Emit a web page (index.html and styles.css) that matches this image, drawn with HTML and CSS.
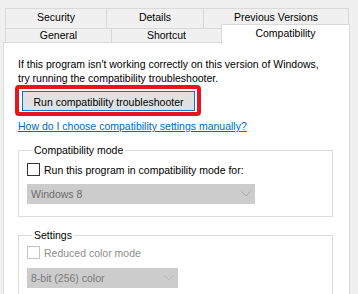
FILE: index.html
```html
<!DOCTYPE html>
<html>
<head>
<meta charset="utf-8">
<link rel="stylesheet" href="styles.css">
</head>
<body>
<div class="window">
  <div class="tabs">
    <div class="tab-row row1">
      <div class="tab t-security">Security</div>
      <div class="tab t-details">Details</div>
      <div class="tab t-prev">Previous Versions</div>
    </div>
    <div class="tab-row row2">
      <div class="tab t-general">General</div>
      <div class="tab t-shortcut">Shortcut</div>
      <div class="tab t-compat selected">Compatibility</div>
    </div>
  </div>
  <div class="panel">
    <p class="intro">If this program isn't working correctly on this version of Windows,<br>try running the compatibility troubleshooter.</p>
    <div class="highlight">
      <button class="btn">Run compatibility troubleshooter</button>
    </div>
    <a class="link" href="#">How do I choose compatibility settings manually?</a>
    <div class="group g-compat">
      <div class="legend">Compatibility mode</div>
      <div class="check c-compat"><span class="box"></span><span>Run this program in compatibility mode for:</span></div>
      <div class="select s-windows"><span>Windows 8</span>
        <svg class="chev" width="10" height="6" viewBox="0 0 10 6"><path d="M0.5 0.5 L5 5 L9.5 0.5" fill="none" stroke="#a6a6a6" stroke-width="1"/></svg>
      </div>
    </div>
    <div class="group g-settings">
      <div class="legend">Settings</div>
      <div class="check disabled c-reduced"><span class="box"></span><span>Reduced color mode</span></div>
      <div class="select s-color"><span>8-bit (256) color</span>
        <svg class="chev" width="10" height="6" viewBox="0 0 10 6"><path d="M0.5 0.5 L5 5 L9.5 0.5" fill="none" stroke="#b8b8b8" stroke-width="1"/></svg>
      </div>
    </div>
  </div>
</div>
</body>
</html>
```
FILE: styles.css
```css
html, body {
  margin: 0;
  padding: 0;
  background: #f0f0f0;
  overflow: hidden;
}
body {
  width: 358px;
  height: 294px;
  font-family: "Liberation Sans", Arial, sans-serif;
  font-size: 10.5px;
  color: #000;
}
.window {
  padding-top: 8px;
}
.tabs {
  padding-left: 5px;
}
.tab-row {
  display: flex;
}
.tab {
  box-sizing: border-box;
  background: #f0f0f0;
  border: 1px solid #d9d9d9;
  border-bottom: none;
  text-align: center;
  margin-right: -1px;
  white-space: nowrap;
}
.row1 .tab { height: 20px; line-height: 17px; }
.t-security { width: 102px; }
.t-details { width: 98px; }
.t-prev { width: 146px; }
.row2 { height: 14px; }
.row2 .tab { height: 14px; line-height: 13px; }
.t-general { width: 107px; }
.t-shortcut { width: 111px; }
.row2 .t-compat {
  width: 129px;
  height: 20px;
  margin-top: -4px;
  background: #fff;
  line-height: 16px;
  position: relative;
  z-index: 2;
}
.panel {
  margin-left: 3px;
  width: 347px;
  box-sizing: border-box;
  height: 260px;
  background: #fff;
  border: 1px solid #d9d9d9;
  padding: 14px 14px 0 14px;
}
.intro {
  margin: 0;
  line-height: 14px;
  white-space: nowrap;
}
.highlight {
  margin-left: -3px;
  width: 186px;
  height: 31px;
  box-sizing: border-box;
  border: 4px solid #e8141c;
  border-radius: 4px;
  padding: 2px 2px 1px 3px;
}
.btn {
  display: block;
  width: 173px;
  height: 20px;
  box-sizing: border-box;
  background: #e1e1e1;
  border: 1px solid #0078d7;
  font-family: inherit;
  font-size: 10.5px;
  padding: 1px 0 0 0;
  color: #000;
  white-space: nowrap;
}
.link {
  display: block;
  margin-top: 3px;
  line-height: 14px;
  color: #0066cc;
  text-decoration: underline;
  white-space: nowrap;
}
.group {
  width: 315px;
  box-sizing: border-box;
  border: 1px solid #dcdcdc;
  padding: 0 8px 12px 8px;
}
.g-compat { margin-top: 17px; }
.g-settings { margin-top: 18px; }
.legend {
  display: table;
  margin: -7px 0 0 5px;
  padding: 0 2px;
  line-height: 13px;
  background: #fff;
}
.check {
  display: flex;
  align-items: center;
  gap: 4px;
  height: 13px;
  white-space: nowrap;
}
.c-compat { margin-top: 6px; }
.c-reduced { margin-top: 4px; }
.box {
  flex: none;
  width: 13px;
  height: 13px;
  box-sizing: border-box;
  border: 1px solid #333;
  background: #fff;
}
.check.disabled { color: #8d8d8d; }
.check.disabled .box { border-color: #c4c4c4; }
.select {
  height: 20px;
  box-sizing: border-box;
  background: #cccccc;
  color: #6d6d6d;
  display: flex;
  align-items: center;
  justify-content: space-between;
  padding: 0 4px 0 4px;
  white-space: nowrap;
}
.s-windows { width: 228px; margin-top: 8px; }
.s-color { width: 151px; margin-top: 9px; color: #7a7a7a; }
```
